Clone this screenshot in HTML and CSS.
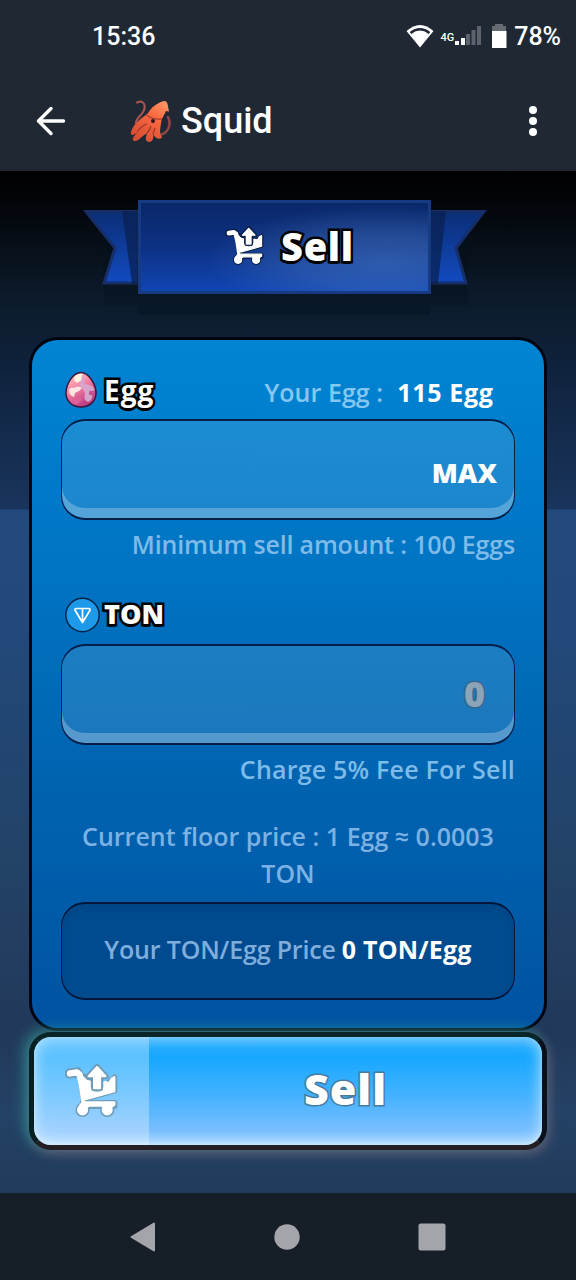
FILE: index.html
```
<!DOCTYPE html>
<html lang="en">
<head>
<meta charset="utf-8">
<title>Squid</title>
<link rel="stylesheet" href="styles.css">
</head>
<body>
<svg width="0" height="0" class="defs">
  <defs>
    <symbol id="cart" viewBox="0 0 160 170">
      <g stroke-linejoin="round" stroke-linecap="round">
        <g fill="currentColor" stroke="currentColor" stroke-width="16">
          <path d="M14 33 L37 30" stroke-width="30"/><path d="M44 36 L66 46 L84 78 H110 L147 44 V84 L56 110 Z"/><path d="M52 120 H147 V130 H52 Z"/>
          <circle cx="52" cy="141" r="13"/><circle cx="125" cy="141" r="13"/><path d="M95 14 L121 42 H106 V80 H85 V42 H69 Z"/>
        </g>
        <g fill="#fff" stroke="#fff" stroke-width="5">
          <path d="M15 33 L35 30 L43 36 L48 56" fill="none" stroke-width="19"/>
          <path d="M45 56 L55 120" fill="none" stroke-width="12"/>
          <path d="M42 38 L56 46 L64 54 L74 56 V74 Q80 89 95 89 Q111 89 116 74 V58 L131 60 L138 48 L147 43 V86 L64 109 L54 110 Z"/>
          <path d="M52 118 H147 V126 L138 133 H116 L108 129 H72 L60 137 H44 V128 Z"/>
          <circle cx="52" cy="141" r="14"/><circle cx="125" cy="141" r="14"/>
        </g>
        <path d="M95 14 L120 41 H104 V77 H86 V41 H70 Z" fill="currentColor" stroke="currentColor" stroke-width="17"/>
        <path d="M95 14 L120 41 H104 V77 H86 V41 H70 Z" fill="#fff" stroke="#fff" stroke-width="6"/>
      </g>
    </symbol>
  </defs>
</svg>

<header class="top">
  <div class="status">
    <span class="clock">15:36</span>
    <div class="signals">
      <svg class="wifi" width="28" height="24" viewBox="0 0 28 24"><path d="M14 23.500 L.5 7 Q14 -5 27.500 7 Z" fill="#fff"/><path d="M4.500 9 Q14 1.500 23.500 9" fill="none" stroke="#1f2733" stroke-width="2.600"/></svg>
      <span class="net">4G</span>
      <svg class="bars" width="27" height="20" viewBox="0 0 27 20"><path d="M0 15h4v4H0zM6 12h4v7H6z" fill="#fff"/><path d="M11 8h4v11h-4zM16.500 4h4v15h-4zM22 0h4v19h-4z" fill="#5d636d"/></svg>
      <svg class="battery" width="16" height="24" viewBox="0 0 16 24"><path d="M1 2h3V0h8v2h3v6H1z" fill="#666b73"/><path d="M1 7h14.500v17H1z" fill="#fff"/></svg>
      <span class="pct">78%</span>
    </div>
  </div>
  <div class="bar">
    <svg class="back" width="30" height="30" viewBox="0 0 30 30" fill="none" stroke="#fff" stroke-width="3.400" stroke-linecap="round" stroke-linejoin="round"><path d="M15 2.500 L2.500 15 L15 27.500 M3 15 H27.500"/></svg>
    <svg class="squid" width="42" height="44" viewBox="0 0 42 44">
      <defs><linearGradient id="sq" gradientUnits="userSpaceOnUse" x1="38" y1="2" x2="8" y2="42"><stop offset="0" stop-color="#ff9a68"/><stop offset=".4" stop-color="#f7693f"/><stop offset="1" stop-color="#d64c33"/></linearGradient></defs>
      <g fill="none" stroke-linecap="round"><path d="M8 3.500 C14 .5 18 6 14 13 C11 18 6 20 7 25 L9 29" stroke="#a05550" stroke-width="2.200"/><path d="M39 18 C43 26 39 34 31 36" stroke="#8d4549" stroke-width="2.600"/></g>
      <path d="M18 15 C10 21 4 26 2 33 C1 37 5 37 8 33 C5 38 2 40 5 42 C9 43 13 37 18 34 C17 38 15 42 20 43 C24 43 25 38 24 35 C26 40 32 41 33 38 C30 35 31 30 33 19 Z" fill="url(#sq)"/>
      <path d="M35 2 Q38 2 38.500 5 L40 12.500 L37 12 L33 20 L17.500 16 L21.500 10.500 Q27 4 35 2Z" fill="url(#sq)"/>
      <path d="M8 33 Q12 27 18 25 M18 34 Q21 31 22 27 M24 35 L26 29" fill="none" stroke="#9d3529" stroke-width="1.200"/><path d="M17.500 16 Q24 21 33 20" fill="none" stroke="#a93f2d" stroke-width="1.300"/>
      <circle cx="24" cy="22" r="2" fill="#31151a"/>
    </svg>
    <h1 class="title">Squid</h1>
    <svg class="more" width="8" height="30" viewBox="0 0 8 30" fill="#fff"><circle cx="4" cy="4" r="4"/><circle cx="4" cy="15" r="4"/><circle cx="4" cy="26" r="4"/></svg>
  </div>
</header>

<main class="stage">
  <section class="ribbon">
    <svg class="ribbon-art" width="404" height="116" viewBox="83 199 404 116">
      <defs>
        <linearGradient id="r1" x1="0" y1="0" x2="0" y2="1"><stop offset="0" stop-color="#0a2767"/><stop offset=".5" stop-color="#0d3184"/><stop offset="1" stop-color="#1146b5"/></linearGradient>
        <linearGradient id="r2" x1="0" y1="0" x2="0" y2="1"><stop offset="0" stop-color="#0b2e76"/><stop offset="1" stop-color="#124bc0"/></linearGradient>
        <radialGradient id="shine" cx=".85" cy=".65" r=".62"><stop offset="0" stop-color="#5586c8" stop-opacity=".45"/><stop offset=".5" stop-color="#5080c4" stop-opacity=".33"/><stop offset="1" stop-color="#4c7ac0" stop-opacity="0"/></radialGradient>
      </defs>
      <path d="M102 234 H138 V222 H430 V234 H468 V305 H430 V315 H138 V305 H104 Z" fill="#03101d" opacity=".35"/>
      <path d="M86 211.500 H138 V283 H104 L115 248 Z M484 211.500 H430 V283 H466 L456 248 Z" fill="url(#r2)" stroke="#162f69" stroke-width="3"/>
      <path d="M122 211 H138 V284 H132 Z M446 211 H430 V284 H438 Z" fill="#0a2050" opacity=".72"/>
      <rect x="139.500" y="201.500" width="290" height="91" fill="url(#r1)"/>
      <rect x="139.500" y="201.500" width="290" height="91" fill="url(#shine)" stroke="#173b82" stroke-width="3"/>
    </svg>
    <div class="ribbon-label">
      <svg class="ribbon-cart"><use href="#cart"/></svg>
      <h2 class="outlined big">Sell</h2>
    </div>
  </section>

  <section class="card">
    <div class="row">
      <div class="token">
        <svg width="34" height="38" viewBox="0 0 34 38">
          <defs><linearGradient id="egg" x1=".2" y1="0" x2=".7" y2="1"><stop offset="0" stop-color="#ffc9c4"/><stop offset=".45" stop-color="#f47c9f"/><stop offset="1" stop-color="#b0347f"/></linearGradient><clipPath id="ec"><path d="M17 2 C25 2 32 14 32 22 C32 31 25 36 17 36 C8 36 2 30 2 22 C2 13 9 2 17 2Z"/></clipPath></defs>
          <path d="M17 1.500 C25 1.500 32 14 32 22 C32 31 25 36 17 36 C8 36 2 30 2 22 C2 13 9 1.500 17 1.500Z" fill="url(#egg)"/>
          <g clip-path="url(#ec)"><path d="M11 4 L19 2 L18 9 L13 12 L10 9Z" fill="#fff0df"/><path d="M5 20 Q5 16 10 17 Q14 14 18 17 Q15 21 11 22 L10 26 Q5 24 5 20Z" fill="#ffe5e2"/><path d="M18 3 Q22 9 20 13 Q28 13 31 19 Q27 19 28 23 Q29 29 24 31 Q19 29 21 23 Q20 18 15 14 Q18 10 18 3Z" fill="#d9a4cb"/><path d="M8 29 Q13 25 18 28 Q15 34 10 33Z" fill="#e0609c"/><circle cx="27" cy="22" r="2.200" fill="#c44f93"/></g>
          <path d="M17 1.500 C25 1.500 32 14 32 22 C32 31 25 36 17 36 C8 36 2 30 2 22 C2 13 9 1.500 17 1.500Z" fill="none" stroke="#3a163d" stroke-width="1.500"/>
        </svg>
        <span class="outlined egg-name">Egg</span>
      </div>
      <div class="balance"><span class="your">Your Egg :</span><b class="amount">115 Egg</b></div>
    </div>
    <div class="field"><span class="max">MAX</span></div>
    <p class="note min">Minimum sell amount : 100 Eggs</p>
    <div class="row second">
      <div class="token ton">
        <svg width="36" height="36" viewBox="0 0 36 36"><circle cx="18.500" cy="18" r="16.700" fill="#1c99e8" stroke="#082348" stroke-width="1.500"/><path d="M12.500 11.500 H24.500 Q27 11.500 25.500 14 L18.500 25.500 L11.500 14 Q10 11.500 12.500 11.500Z M18.500 12 V24" fill="none" stroke="#fff" stroke-width="1.700" stroke-linejoin="round"/></svg>
        <span class="outlined ton-name">TON</span>
      </div>
    </div>
    <div class="field"><span class="zero">0</span></div>
    <p class="note fee">Charge 5% Fee For Sell</p>
    <p class="floor"><span class="floor-a">Current floor price : 1 Egg ≈ 0.0003</span> <span class="floor-b">TON</span></p>
    <div class="price"><span class="price-label">Your TON/Egg Price</span><b class="price-value">0 TON/Egg</b></div>
  </section>

  <button class="sell">
    <span class="sell-icon"><svg class="sell-cart"><use href="#cart"/></svg></span>
    <span class="sell-text">Sell</span>
  </button>
</main>

<nav class="nav">
  <svg width="26" height="30" viewBox="0 0 26 30"><path d="M1.500 15 L24 1.500 V28.500 Z" fill="#a4a5aa" stroke="#a4a5aa" stroke-width="2" stroke-linejoin="round"/></svg>
  <svg width="26" height="26" viewBox="0 0 26 26"><circle cx="13" cy="13" r="12.700" fill="#a4a5aa"/></svg>
  <svg width="28" height="28" viewBox="0 0 28 28"><rect x=".5" y=".5" width="27" height="27" rx="2" fill="#a4a5aa"/></svg>
</nav>
</body>
</html>
```

FILE: styles.css
```
* { box-sizing: border-box; }
body { margin: 0; width: 576px; height: 1280px; overflow: hidden; display: flex; flex-direction: column; background: #161e27; font-family: "Open Sans", "Noto Sans", sans-serif; color: #fff; }
h1, h2, p { margin: 0; }
svg { display: block; flex: none; }
.defs { position: absolute; }

.top { height: 171px; flex: none; background: #1f2833; font-family: Roboto, sans-serif; }
.status { height: 73px; display: flex; justify-content: space-between; align-items: center; padding: 1px 15px 0 92px; }
.clock, .pct { font-size: 25px; font-weight: 500; line-height: 30px; }
.signals { display: flex; align-items: center; }
.wifi { margin-right: 6px; margin-top: -3px; }
.net { font-size: 11px; font-weight: 500; margin-right: 1px; }
.bars { margin-right: 9px; margin-top: -2px; }
.battery { margin-right: 7px; margin-top: -3px; }
.bar { height: 95px; display: flex; align-items: center; padding: 0 39px 0 36px; }
.squid { margin-left: 63px; }
.title { margin-left: 10px; font-size: 36px; font-weight: 500; line-height: 42px; flex: 1; }

.stage { height: 1022px; flex: none; padding: 28px 29px 0; background: linear-gradient(#000 0, #030509 30px, #0c1a2a 125px, #102440 210px, #19355d 338px, #234a7c 339px, #22497a 460px, #234267 700px, #21395a 860px, #244266 940px, #203c5c 1022px); }
.ribbon { display: grid; height: 138px; padding-left: 54px; }
.ribbon-art, .ribbon-label { grid-area: 1 / 1; }
.ribbon-label { width: 292px; height: 94px; margin-left: 55px; display: flex; align-items: center; padding-left: 87px; }
.ribbon-cart { width: 40px; height: 42px; color: #0b2048; }
.outlined { font-weight: 800; paint-order: stroke fill; -webkit-text-stroke: 5px #000; text-shadow: 0 3px 0 #000; }
.big { font-size: 38px; line-height: 46px; margin-left: 16px; letter-spacing: .7px; }

.card { height: 694px; border: 3px solid #000611; border-radius: 29px; padding: 30px 29px 0; background: linear-gradient(#0085d3, #0074c3 33%, #0063b0 65%, #0053a1); }
.row { height: 49px; display: flex; justify-content: space-between; padding: 0 22px 0 3px; }
.token { display: flex; height: 40px; align-items: center; }
.egg-name, .ton-name { font-size: 28px; line-height: 36px; font-weight: 700; margin-left: 6px; letter-spacing: 1px; }
.ton-name { margin-left: 4px; font-size: 27px; font-weight: 800; letter-spacing: 0; margin-top: -2px; }
.balance { display: flex; align-items: center; height: 43px; font-size: 25px; }
.your { color: #86c7f2; font-weight: 600; margin-right: 14px; letter-spacing: .05px; }
.amount { font-weight: 700; letter-spacing: .7px; margin-right: -.7px; }
.field { height: 101px; border: solid #061f49; border-width: 2px 1px; border-radius: 24px; background: #ffffff1c; box-shadow: inset 0 -10px 0 #ffffff40; display: flex; align-items: center; justify-content: flex-end; padding: 0 17px; }
.max { font-size: 27px; font-weight: 800; line-height: 36px; margin-top: 6px; }
.note { height: 50px; line-height: 48px; text-align: right; font-size: 25px; font-weight: 600; color: #7fbbe8; white-space: nowrap; }
.min { letter-spacing: -.17px; }
.fee { letter-spacing: .2px; }
.second { margin-top: 25px; }
.zero { font-size: 36px; font-weight: 800; margin: -2px 12px 0 0; color: #8ba4b7; paint-order: stroke fill; -webkit-text-stroke: 3px #35688f; }
.floor { margin-top: 23px; height: 84px; display: flex; flex-direction: column; align-items: center; font-size: 25px; line-height: 37px; font-weight: 600; color: #7cb2e3; white-space: nowrap; }
.price { height: 98px; border: solid #00163b; border-width: 2px 1px; border-radius: 24px; background: #004b8f; box-shadow: inset 0 5px 9px #00326633; display: flex; align-items: center; justify-content: center; gap: 6px; padding-bottom: 4px; font-size: 25px; white-space: nowrap; }
.price-label { font-weight: 600; color: #80aedc; letter-spacing: -.17px; }
.price-value { font-weight: 700; letter-spacing: .2px; }

.sell { position: relative; width: 518px; height: 118px; margin: 1px 0 0; padding: 0; border: 5px solid; border-color: #0a2528 #0b111a #251e22 #071f22; border-radius: 22px; display: flex; align-items: stretch; overflow: visible; font-family: inherit; color: #fff; background: linear-gradient(#24aaff, #18a8ff 20%, #45b2ff 55%, #7bbfff 88%, #9bcfff); box-shadow: -5px -3px 13px #36b3a688, 3px 5px 12px #ad788866; }
.sell::after { content: ""; position: absolute; inset: 0; border-radius: 17px; box-shadow: inset 0 0 13px 3px #d9f1ff99, inset 0 -2px 4px #fff6; pointer-events: none; }
.sell-icon { width: 115px; border-radius: 17px 0 0 17px; background: #ffffff4d; display: flex; align-items: center; justify-content: center; }
.sell-cart { width: 54px; height: 58px; margin: 0 0 0 1px; color: #6e9cb9; }
.sell-text { flex: 1; text-align: center; align-self: center; font-size: 43px; font-weight: 800; line-height: 52px; margin-top: -5px; letter-spacing: 1px; paint-order: stroke fill; -webkit-text-stroke: 3px #467b9f; text-shadow: 1px 1px 0 #467b9f; }

.nav { flex: 1; display: flex; align-items: center; justify-content: center; gap: 118px; padding-left: 0; background: #161e27; }
```
